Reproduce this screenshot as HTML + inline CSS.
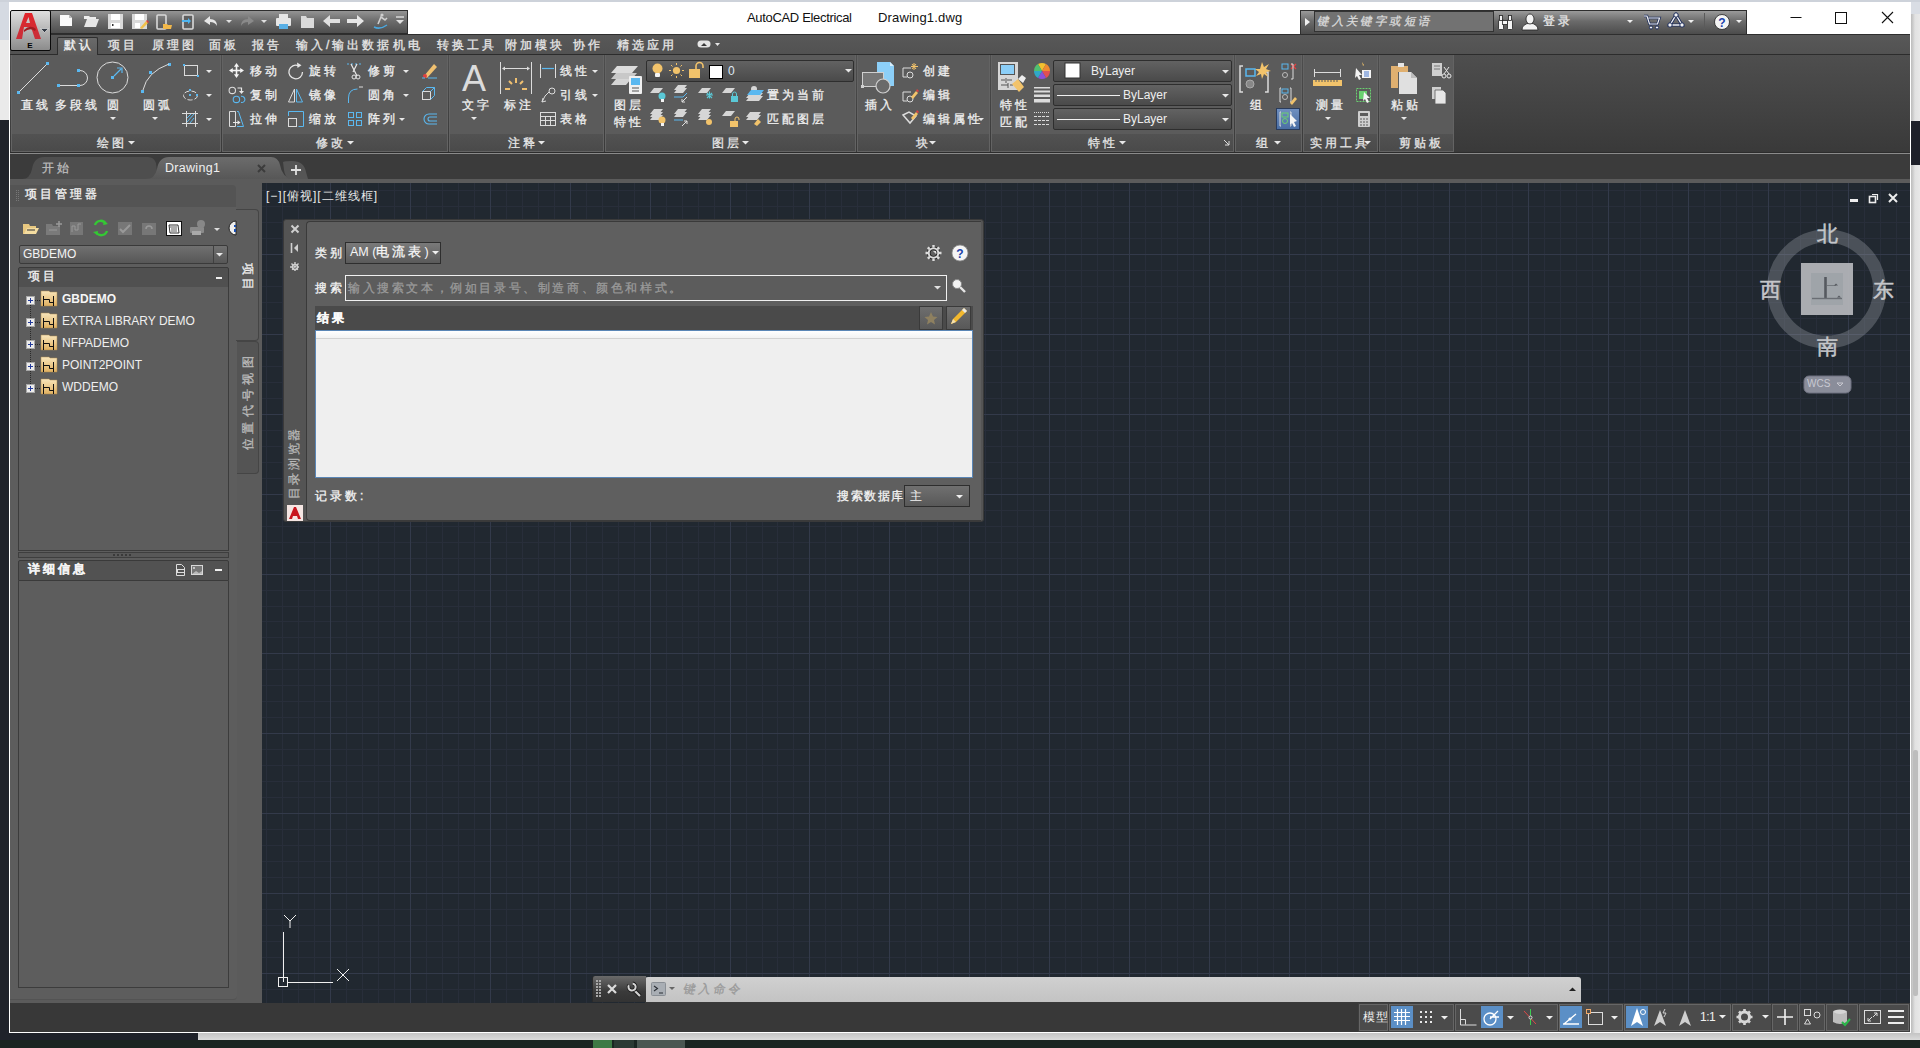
<!DOCTYPE html>
<html><head><meta charset="utf-8"><title>AutoCAD Electrical - Drawing1.dwg</title>
<style>
*{margin:0;padding:0;box-sizing:border-box}
html,body{width:1920px;height:1048px;overflow:hidden;background:#1f222a;font-family:"Liberation Sans",sans-serif;font-size:12px;color:#e6e6e6}
.a{position:absolute;white-space:nowrap}
svg{position:absolute;overflow:visible}
.zh{letter-spacing:3px}
.lbl,.pt,[style*="letter-spacing:3px"],[style*="letter-spacing:2.6px"],[style*="letter-spacing:4.3px"],[style*="letter-spacing:2.4px"],[style*="letter-spacing:1.6px"]{-webkit-text-stroke:0.3px currentColor}
.t12{font-size:12px;line-height:14px}
.lbl{position:absolute;white-space:nowrap;font-size:12px;line-height:14px;color:#f0f0f0;letter-spacing:3px}
.dd{position:absolute;width:0;height:0;border-left:3px solid transparent;border-right:3px solid transparent;border-top:3px solid #e8e8e8}
.pt{position:absolute;white-space:nowrap;font-size:12px;line-height:14px;color:#e6e6e6;letter-spacing:3px}
</style></head><body>
<!-- ===== desktop ===== -->
<div class="a" style="left:0;top:0;width:10px;height:40px;background:#d5dae2"></div>
<div class="a" style="left:0;top:40px;width:10px;height:80px;background:#eaeaea"></div>
<div class="a" style="left:1911px;top:0;width:9px;height:1040px;background:linear-gradient(90deg,#bcbcbc,#cdcdcd 2px,#e2e2e2 4px,#e8e8e8)"></div>
<div class="a" style="left:1911px;top:0;width:9px;height:14px;background:#d9dde4"></div>
<div class="a" style="left:1911px;top:121px;width:9px;height:44px;background:#1e2029"></div>
<div class="a" style="left:1913px;top:750px;width:5px;height:246px;background:#bdbdbd;border-radius:2px"></div>
<div class="a" style="left:198px;top:1033px;width:1722px;height:7px;background:linear-gradient(#c4c4c4,#dadada)"></div>
<div class="a" style="left:0;top:1040px;width:1920px;height:8px;background:#1a2622"></div>
<div class="a" style="left:593px;top:1040px;width:19px;height:8px;background:#3d7a45"></div>
<div class="a" style="left:614px;top:1040px;width:20px;height:8px;background:#2b3a34"></div>
<div class="a" style="left:637px;top:1040px;width:48px;height:8px;background:#4a5752"></div>

<!-- ===== window ===== -->
<div class="a" style="left:0;top:0;width:1920px;height:2px;background:#cdd2da"></div>
<div class="a" style="left:9px;top:2px;width:1902px;height:1031px;background:#ffffff"></div>

<!-- title text -->
<div class="a" style="left:747px;top:11px;font-size:13px;line-height:14px;color:#111;letter-spacing:-0.33px">AutoCAD Electrical</div>
<div class="a" style="left:878px;top:11px;font-size:13px;line-height:14px;color:#111;letter-spacing:0.17px">Drawing1.dwg</div>

<!-- window controls -->
<svg style="left:0;top:0" width="1920" height="40">
<path d="M1790.5 17.5h11" stroke="#111" stroke-width="1"/>
<rect x="1835.5" y="12.5" width="11" height="11" fill="none" stroke="#111"/>
<path d="M1882 12l11 11M1893 12l-11 11" stroke="#111" stroke-width="1.1"/>
</svg>

<!-- app button -->
<div class="a" style="left:10px;top:10px;width:41px;height:41px;border:1px solid #0a0a0a;border-radius:2px;background:linear-gradient(#dedede,#8c8c8c);z-index:5"></div>
<svg style="left:10px;top:10px;z-index:6" width="41" height="41">
<defs><linearGradient id="ag" x1="0" y1="0" x2="0" y2="1"><stop offset="0" stop-color="#e2252b"/><stop offset="1" stop-color="#c8303a"/></linearGradient></defs>
<path d="M6 29 L15 3 L22 3 L31 29 L25 29 L21 17 L14 17 L12 29Z M16 13 L20 13 L18.5 7Z" fill="url(#ag)" fill-rule="evenodd"/>
<path d="M14 20 Q20 14 26 19 L25 21 Q20 17 14 22Z" fill="#a01c22"/>
<path d="M30.5 18.5h8l-4 4z" fill="#333a44" stroke="#f0f0f0" stroke-width="0.6"/>
<text x="20" y="38" font-family="Liberation Sans" font-weight="bold" font-size="8" fill="#000" text-anchor="middle">E</text>
</svg>

<!-- quick access toolbar -->
<div class="a" style="left:50px;top:10px;width:358px;height:24px;background:linear-gradient(#949494 0,#6c6c6c 45%,#4e4e4e 100%);border-top:1px solid #2e2e2e;border-bottom:1px solid #2c2c2c;border-right:1px solid #2e2e2e"></div>
<svg style="left:0;top:0" width="420" height="40">
<!-- new -->
<path d="M60 15h9l3 3v8h-12z" fill="#fafafa"/><path d="M69 15v3h3z" fill="#bdbdbd"/>
<!-- open -->
<path d="M84 16h5l1 1h6v2h-12z" fill="#ededed"/><path d="M84 27l3-8h12l-3 8z" fill="#e6e6e6"/>
<!-- save -->
<path d="M108 14h15v15h-15z" fill="#d9d9d9"/><rect x="111" y="14" width="9" height="6" fill="#fff"/><rect x="111" y="23" width="9" height="5" fill="#fff"/><rect x="112" y="24" width="1.5" height="2" fill="#333"/>
<!-- save as -->
<path d="M132 14h15v15h-15z" fill="#d9d9d9"/><rect x="135" y="14" width="9" height="6" fill="#fff"/><rect x="135" y="23" width="5" height="5" fill="#fff"/>
<path d="M140 28l6-7 2 2-6 6z" fill="#f2c04a"/><path d="M146 21l1-1 2 2-1 1z" fill="#e03a3a"/>
<!-- open from cloud -->
<rect x="157" y="15" width="9" height="14" rx="1" fill="none" stroke="#d9d9d9" stroke-width="1.6"/><path d="M163 24h4l1 1h4l-1 4h-8z" fill="#f2b84a"/>
<!-- save to cloud -->
<rect x="183" y="15" width="10" height="14" rx="1" fill="#5f5f5f" stroke="#d9d9d9" stroke-width="1.6"/><path d="M182 20h6v-2l3 3-3 3v-2h-6z" fill="#4eb4ef"/>
<!-- undo -->
<path d="M204 21l6-5v3q7 0 7 7q-2-4-7-4v3z" fill="#e6e6e6"/><path d="M226 20h6l-3 3z" fill="#e0e0e0"/>
<!-- redo -->
<path d="M254 21l-6-5v3q-7 0-7 7q2-4 7-4v3z" fill="#8a8a8a"/><path d="M261 20h6l-3 3z" fill="#e0e0e0"/>
<!-- plot -->
<rect x="276" y="18" width="15" height="8" rx="1" fill="#e6e6e6"/><rect x="279" y="14" width="9" height="4" fill="#e6e6e6"/><rect x="279" y="24" width="9" height="5" fill="#5ab0e6"/>
<!-- folder -->
<path d="M301 16h5l1 2h7v10h-13z" fill="#dadada"/>
<!-- back / forward -->
<path d="M323 21l7-6v4h10v4h-10v4z" fill="#e0e0e0"/><path d="M364 21l-7-6v4h-10v4h10v4z" fill="#e6e6e6"/>
<!-- surfer -->
<path d="M374 27q6 3 13-2" stroke="#4aa8e0" stroke-width="1.5" fill="none"/><circle cx="382" cy="15" r="1.6" fill="#cfcfcf"/><path d="M378 24l3-7 4 3 2-2" stroke="#cfcfcf" stroke-width="1.6" fill="none"/>
<!-- customize -->
<path d="M396 17h8" stroke="#e0e0e0" stroke-width="1.4"/><path d="M396 20h8l-4 4z" fill="#e0e0e0"/>
</svg>

<!-- infocenter toolbar -->
<div class="a" style="left:1300px;top:10px;width:447px;height:24px;background:linear-gradient(#9a9a9a,#6a6a6a 45%,#4c4c4c);border:1px solid #2e2e2e;border-bottom:none"></div>
<div class="a" style="left:1314px;top:11px;width:180px;height:21px;background:#727272;border:1px solid #333"></div>
<div class="a" style="left:1318px;top:14px;font-size:11.5px;line-height:14px;color:#dadada;transform:skewX(-12deg);letter-spacing:2.4px">键入关键字或短语</div>
<svg style="left:0;top:0" width="1920" height="40">
<path d="M1305 18l5 4-5 4z" fill="#f0f0f0"/>
<g stroke="#222" stroke-width="0.8" fill="#f4f4f4">
<rect x="1498.5" y="19.5" width="5" height="10" rx="1"/><rect x="1507.5" y="19.5" width="5" height="10" rx="1"/>
<rect x="1499.5" y="15.5" width="3" height="5"/><rect x="1508.5" y="15.5" width="3" height="5"/>
<rect x="1502.5" y="20.5" width="5" height="4"/>
</g>
<path d="M1522 30q0-6 8-7q8 1 8 7z" fill="#f4f4f4" stroke="#222" stroke-width="0.8"/>
<ellipse cx="1530" cy="19" rx="4" ry="5" fill="#f4f4f4" stroke="#222" stroke-width="0.8"/>
<path d="M1627 20h6l-3 3z" fill="#f0f0f0"/>
<path d="M1644 16h3l2.5 8h8l2-6h-11" stroke="#1a2a5a" stroke-width="2.6" fill="none"/>
<path d="M1644 16h3l2.5 8h8l2-6h-11" stroke="#f4f4f4" stroke-width="1.2" fill="none"/>
<circle cx="1651" cy="27.5" r="1.6" fill="#f4f4f4" stroke="#1a2a5a"/><circle cx="1657" cy="27.5" r="1.6" fill="#f4f4f4" stroke="#1a2a5a"/>
<path d="M1676 15l-6 10h12z" fill="none" stroke="#1a2a5a" stroke-width="3"/><path d="M1676 15l-6 10h12z" fill="none" stroke="#f4f4f4" stroke-width="1.4"/>
<circle cx="1676" cy="15" r="2.2" fill="#f4f4f4" stroke="#1a2a5a"/><circle cx="1670" cy="25" r="2.2" fill="#f4f4f4" stroke="#1a2a5a"/><circle cx="1682" cy="25" r="2.2" fill="#f4f4f4" stroke="#1a2a5a"/>
<path d="M1688 20h6l-3 3z" fill="#f0f0f0"/>
<path d="M1704.5 13v17" stroke="#5a5a5a"/>
<circle cx="1722" cy="22" r="7.5" fill="#f4f4f4" stroke="#222" stroke-width="0.8"/>
<text x="1722" y="26.5" font-family="Liberation Sans" font-weight="bold" font-size="12" fill="#1a3faa" text-anchor="middle">?</text>
<path d="M1736 20h6l-3 3z" fill="#f0f0f0"/>
</svg>
<div class="a" style="left:1543px;top:14px;font-size:12px;line-height:14px;color:#e6e6e6;letter-spacing:3px">登录</div>

<!-- ===== ribbon tabs ===== -->
<div class="a" style="left:10px;top:34px;width:1900px;height:21px;background:linear-gradient(#585858,#525252);border-top:1px solid #2e2e2e;border-bottom:1px solid #2c2c2c"></div>
<div class="a" style="left:57px;top:37px;width:41px;height:19px;background:linear-gradient(#6a6a6a,#5b5b5b);border:1px solid #2e2e2e;border-bottom:none;border-radius:2px 2px 0 0"></div>
<div class="pt" style="left:64px;top:38px;color:#f4f4f4">默认</div>
<div class="pt" style="left:108px;top:38px">项目</div>
<div class="pt" style="left:152px;top:38px">原理图</div>
<div class="pt" style="left:209px;top:38px">面板</div>
<div class="pt" style="left:252px;top:38px">报告</div>
<div class="pt" style="left:296px;top:38px">输入/输出数据</div>
<div class="pt" style="left:393px;top:38px">机电</div>
<div class="pt" style="left:437px;top:38px">转换工具</div>
<div class="pt" style="left:505px;top:38px">附加模块</div>
<div class="pt" style="left:573px;top:38px">协作</div>
<div class="pt" style="left:617px;top:38px">精选应用</div>
<svg style="left:0;top:0" width="760" height="60">
<rect x="697.5" y="40.5" width="13" height="7" rx="3.5" fill="#e6e6e6"/><path d="M701 46l3-3 3 3z" fill="#3a3a3a"/>
<path d="M715 43h5l-2.5 3z" fill="#e6e6e6"/>
</svg>

<!-- ===== ribbon body ===== -->
<div class="a" style="left:10px;top:55px;width:1900px;height:98px;background:linear-gradient(#4e4e4e,#393939)"></div>
<div class="a" style="left:10px;top:152px;width:1900px;height:1px;background:#2c2c2c"></div>
<div class="a" style="left:10px;top:153px;width:1900px;height:1px;background:#8a8a8a"></div>
<!-- panels -->
<div class="a" style="left:11px;top:55px;width:210px;height:97px;background:#5b5b5b;border:1px solid #636363;border-top:none"></div>
<div class="a" style="left:222px;top:55px;width:226px;height:97px;background:#5b5b5b;border:1px solid #636363;border-top:none"></div>
<div class="a" style="left:449px;top:55px;width:155px;height:97px;background:#5b5b5b;border:1px solid #636363;border-top:none"></div>
<div class="a" style="left:605px;top:55px;width:251px;height:97px;background:#5b5b5b;border:1px solid #636363;border-top:none"></div>
<div class="a" style="left:857px;top:55px;width:133px;height:97px;background:#5b5b5b;border:1px solid #636363;border-top:none"></div>
<div class="a" style="left:991px;top:55px;width:243px;height:97px;background:#5b5b5b;border:1px solid #636363;border-top:none"></div>
<div class="a" style="left:1235px;top:55px;width:67px;height:97px;background:#5b5b5b;border:1px solid #636363;border-top:none"></div>
<div class="a" style="left:1303px;top:55px;width:75px;height:97px;background:#5b5b5b;border:1px solid #636363;border-top:none"></div>
<div class="a" style="left:1379px;top:55px;width:75px;height:97px;background:#5b5b5b;border:1px solid #636363;border-top:none"></div>
<!-- panel title bars -->
<div class="a" style="left:12px;top:134px;width:208px;height:17px;background:linear-gradient(#525252,#4a4a4a)"></div>
<div class="a" style="left:223px;top:134px;width:224px;height:17px;background:linear-gradient(#525252,#4a4a4a)"></div>
<div class="a" style="left:450px;top:134px;width:153px;height:17px;background:linear-gradient(#525252,#4a4a4a)"></div>
<div class="a" style="left:606px;top:134px;width:249px;height:17px;background:linear-gradient(#525252,#4a4a4a)"></div>
<div class="a" style="left:858px;top:134px;width:131px;height:17px;background:linear-gradient(#525252,#4a4a4a)"></div>
<div class="a" style="left:992px;top:134px;width:241px;height:17px;background:linear-gradient(#525252,#4a4a4a)"></div>
<div class="a" style="left:1236px;top:134px;width:65px;height:17px;background:linear-gradient(#525252,#4a4a4a)"></div>
<div class="a" style="left:1304px;top:134px;width:73px;height:17px;background:linear-gradient(#525252,#4a4a4a)"></div>
<div class="a" style="left:1380px;top:134px;width:73px;height:17px;background:linear-gradient(#525252,#4a4a4a)"></div>
<!-- panel titles -->
<div class="pt" style="left:97px;top:136px">绘图</div>
<div class="pt" style="left:316px;top:136px">修改</div>
<div class="pt" style="left:508px;top:136px">注释</div>
<div class="pt" style="left:712px;top:136px">图层</div>
<div class="pt" style="left:916px;top:136px">块</div>
<div class="pt" style="left:1088px;top:136px">特性</div>
<div class="pt" style="left:1256px;top:136px">组</div>
<div class="pt" style="left:1310px;top:136px">实用工具</div>
<div class="pt" style="left:1399px;top:136px">剪贴板</div>

<!-- ribbon labels -->
<div class="lbl" style="left:21px;top:98px">直线</div>
<div class="lbl" style="left:55px;top:98px">多段线</div>
<div class="lbl" style="left:107px;top:98px">圆</div>
<div class="lbl" style="left:143px;top:98px">圆弧</div>
<div class="lbl" style="left:250px;top:64px">移动</div>
<div class="lbl" style="left:250px;top:88px">复制</div>
<div class="lbl" style="left:250px;top:112px">拉伸</div>
<div class="lbl" style="left:309px;top:64px">旋转</div>
<div class="lbl" style="left:309px;top:88px">镜像</div>
<div class="lbl" style="left:309px;top:112px">缩放</div>
<div class="lbl" style="left:368px;top:64px">修剪</div>
<div class="lbl" style="left:368px;top:88px">圆角</div>
<div class="lbl" style="left:368px;top:112px">阵列</div>
<div class="lbl" style="left:462px;top:98px">文字</div>
<div class="lbl" style="left:504px;top:98px">标注</div>
<div class="lbl" style="left:560px;top:64px">线性</div>
<div class="lbl" style="left:560px;top:88px">引线</div>
<div class="lbl" style="left:560px;top:112px">表格</div>
<div class="lbl" style="left:614px;top:98px">图层</div>
<div class="lbl" style="left:614px;top:115px">特性</div>
<div class="lbl" style="left:767px;top:88px">置为当前</div>
<div class="lbl" style="left:767px;top:112px">匹配图层</div>
<div class="lbl" style="left:865px;top:98px">插入</div>
<div class="lbl" style="left:923px;top:64px">创建</div>
<div class="lbl" style="left:923px;top:88px">编辑</div>
<div class="lbl" style="left:923px;top:112px">编辑属性</div>
<div class="lbl" style="left:1000px;top:98px">特性</div>
<div class="lbl" style="left:1000px;top:115px">匹配</div>
<div class="lbl" style="left:1250px;top:98px">组</div>
<div class="lbl" style="left:1316px;top:98px">测量</div>
<div class="lbl" style="left:1391px;top:98px">粘贴</div>

<!-- layer dropdown -->
<div class="a" style="left:646px;top:60px;width:208px;height:22px;background:linear-gradient(#626262,#4a4a4a);border:1px solid #2e2e2e;border-radius:2px"></div>
<div class="a" style="left:728px;top:64px;font-size:12px;line-height:14px;color:#dfe8f4">0</div>
<!-- property dropdowns -->
<div class="a" style="left:1053px;top:60px;width:179px;height:22px;background:linear-gradient(#626262,#4a4a4a);border:1px solid #2e2e2e;border-radius:2px"></div>
<div class="a" style="left:1053px;top:84px;width:179px;height:22px;background:linear-gradient(#626262,#4a4a4a);border:1px solid #2e2e2e;border-radius:2px"></div>
<div class="a" style="left:1053px;top:108px;width:179px;height:22px;background:linear-gradient(#626262,#4a4a4a);border:1px solid #2e2e2e;border-radius:2px"></div>
<div class="a" style="left:1091px;top:64px;font-size:12px;line-height:14px;color:#eee">ByLayer</div>
<div class="a" style="left:1123px;top:88px;font-size:12px;line-height:14px;color:#eee">ByLayer</div>
<div class="a" style="left:1123px;top:112px;font-size:12px;line-height:14px;color:#eee">ByLayer</div>
<!-- group highlighted button -->
<div class="a" style="left:1276px;top:108px;width:24px;height:22px;background:linear-gradient(#6f8fbf,#4a6ea4);border:1px solid #2a3c5c"></div>

<svg style="left:0;top:0" width="1460" height="160">
<g fill="#5ab8f0">
<rect x="17" y="91" width="3" height="3"/><rect x="46" y="62" width="3" height="3"/>
<rect x="57" y="84" width="3" height="3"/><rect x="77" y="84" width="3" height="3"/><rect x="77" y="69" width="3" height="3"/>
<rect x="111" y="76" width="3" height="3"/>
<rect x="141" y="90" width="3" height="3"/><rect x="149" y="71" width="3" height="3"/><rect x="168" y="63" width="3" height="3"/>
</g>
<g fill="none" stroke="#dcdcdc" stroke-width="1">
<path d="M19.5 91.5L46.5 64.5"/>
<path d="M60 85.5h17M80 70.5a7.5 7.5 0 0 1 0 15"/>
<circle cx="112.5" cy="77.5" r="15.5"/>
<path d="M143 90q4-18 26-26"/>
</g>
<path d="M114 76l7-7M117 68h5v5" stroke="#5ab8f0" stroke-width="1.2" fill="none"/>
<!-- rect / ellipse / hatch -->
<rect x="184.5" y="65.5" width="13" height="10" fill="none" stroke="#dcdcdc"/>
<rect x="183" y="64" width="2" height="2" fill="#5ab8f0"/><rect x="197" y="75" width="2" height="2" fill="#5ab8f0"/>
<ellipse cx="190.5" cy="95.5" rx="7" ry="4.5" fill="none" stroke="#dcdcdc" stroke-dasharray="5 2"/>
<rect x="189" y="94" width="2" height="2" fill="#5ab8f0"/><rect x="196" y="94" width="2" height="2" fill="#5ab8f0"/><rect x="189" y="89" width="2" height="2" fill="#5ab8f0"/>
<path d="M186.5 111v16M195.5 111v16M182 113.5h16M182 123.5h16" stroke="#dcdcdc" fill="none"/>
<path d="M187 122l7-8M187 118l4-4M190 123l4-5" stroke="#5ab8f0" fill="none"/>
<g fill="#e8e8e8">
<path d="M206 70h6l-3 3z"/><path d="M206 94h6l-3 3z"/><path d="M206 118h6l-3 3z"/>
<path d="M110 117h6l-3 3z"/><path d="M152 117h6l-3 3z"/>
<path d="M403 70h6l-3 3z"/><path d="M403 94h6l-3 3z"/><path d="M399 118h6l-3 3z"/>
<path d="M471 117h6l-3 3z"/><path d="M592 70h6l-3 3z"/><path d="M592 94h6l-3 3z"/>
<path d="M845 69h7l-3.5 3.5z"/>
<path d="M978 118h6l-3 3z"/>
<path d="M1222 70h7l-3.5 3.5z"/><path d="M1222 94h7l-3.5 3.5z"/><path d="M1222 118h7l-3.5 3.5z"/>
<path d="M1325 117h6l-3 3z"/><path d="M1401 117h6l-3 3z"/>
<path d="M128 141h7l-3.5 3.5z"/><path d="M347 141h7l-3.5 3.5z"/><path d="M538 141h7l-3.5 3.5z"/><path d="M742 141h7l-3.5 3.5z"/>
<path d="M929 141h7l-3.5 3.5z"/><path d="M1119 141h7l-3.5 3.5z"/><path d="M1274 141h7l-3.5 3.5z"/><path d="M1364 141h7l-3.5 3.5z"/>
</g>
<path d="M1224 140l5 5M1229 141v4h-4" stroke="#ddd" fill="none"/>

<!-- modify panel icons -->
<g fill="#f4f4f4"><rect x="231" y="69.7" width="11" height="1.6"/><rect x="235.7" y="65" width="1.6" height="11"/>
<path d="M236.5 63l-2.6 3.8h5.2zM236.5 78l-2.6-3.8h5.2zM229 70.5l3.8-2.6v5.2zM244 70.5l-3.8-2.6v5.2z"/></g>
<circle cx="232.3" cy="90.4" r="3.2" fill="none" stroke="#dcdcdc" stroke-width="1.1"/><path d="M237.5 88h4v3.5" stroke="#e8e8e8" stroke-width="1.2" fill="none"/><path d="M239 91h5l-2.5 3z" fill="#e8e8e8"/>
<circle cx="236.4" cy="99.4" r="3.2" fill="none" stroke="#5ab8f0" stroke-width="1.1"/><path d="M241 96.4a3.1 3.1 0 1 1 0 6" fill="none" stroke="#5ab8f0" stroke-width="1.1"/>
<path d="M229.5 111.5h6v15h-6z" fill="none" stroke="#dcdcdc"/><path d="M233 122.5h5" stroke="#e8e8e8"/><path d="M237.5 120.3l3 2.2-3 2.2z" fill="#e8e8e8"/><path d="M237 111.5h1.5l5 15h-6.5" stroke="#5ab8f0" fill="none"/>
<path d="M302.5 72a6.8 6.8 0 1 1-4-6.2" fill="none" stroke="#e6e6e6" stroke-width="1.3"/><path d="M297 62.5l4.5 2.8-4 2.8z" fill="#e6e6e6"/>
<path d="M294.5 89l-6 13h6z" fill="none" stroke="#dcdcdc"/><path d="M296.5 89l6 13h-6z" fill="none" stroke="#5ab8f0"/>
<path d="M288.5 116v-4.5h15v15h-5" fill="none" stroke="#5ab8f0"/><rect x="288.5" y="118.5" width="8" height="8" fill="none" stroke="#dcdcdc"/>
<path d="M347 64h16" stroke="#5ab8f0" stroke-dasharray="2 2"/><path d="M351 64l6 12M357 64l-4 8" stroke="#e8e8e8" stroke-width="1.2"/><circle cx="354" cy="77" r="2" fill="none" stroke="#e8e8e8"/><circle cx="358" cy="77" r="2" fill="none" stroke="#e8e8e8"/>
<path d="M348.5 103v-5q0-9 9-9" stroke="#5ab8f0" fill="none"/><path d="M359 87h4" stroke="#dcdcdc"/>
<g fill="none" stroke="#5ab8f0"><rect x="348.5" y="112.5" width="5" height="5"/><rect x="356.5" y="112.5" width="5" height="5"/><rect x="348.5" y="120.5" width="5" height="5"/><rect x="356.5" y="120.5" width="5" height="5"/></g>
<path d="M424 76l10-12 3 3-10 11z" fill="#f0c070"/><circle cx="425" cy="76" r="2" fill="#e04040"/><path d="M422 78h3M428 78h9" stroke="#5ab8f0"/>
<rect x="422.5" y="91.5" width="8" height="8" fill="none" stroke="#dcdcdc"/><path d="M422.5 91.5l4-4h8v8l-4 4M430.5 91.5l4-4" stroke="#5ab8f0" fill="none"/>
<path d="M437 114h-8a5 5 0 0 0 0 10h8M437 117h-7a2 2 0 0 0 0 4h7" stroke="#5ab8f0" fill="none" stroke-width="1.1"/>

<!-- annotation -->
<text x="474" y="91" font-family="Liberation Sans" font-size="36" fill="#dcdcdc" text-anchor="middle">A</text>
<path d="M500.5 62v32M531.5 62v32M503 68.5h26" stroke="#dcdcdc" fill="none"/><path d="M502 68.5l3-2v4zM530 68.5l-3-2v4z" fill="#dcdcdc"/>
<path d="M516 78v5M509 81l3 3M523 81l-3 3M505 89h5M522 89h5" stroke="#f0c070" stroke-width="2"/>
<path d="M540.5 64v14M555.5 64v14" stroke="#dcdcdc"/><path d="M542 68.5h12" stroke="#5ab8f0" stroke-width="1.2"/>
<circle cx="552" cy="91" r="3" fill="none" stroke="#dcdcdc"/><path d="M549 92l-4 4-3 6M542 102l1-4M542 102l4-1" stroke="#dcdcdc" fill="none"/>
<rect x="540.5" y="112.5" width="15" height="13" fill="none" stroke="#dcdcdc"/><path d="M540 116.5h16M540 120.5h16M545.5 116v10M550.5 116v10" stroke="#dcdcdc"/>

<!-- layer properties big icon -->
<path d="M611 73l6-7h21l-6 7z" fill="#dcdcdc"/><path d="M611 79l5-6h21l-5 6z" fill="#c8c8c8"/><path d="M611 85l5-6h15l-5 6z" fill="#d6d6d6"/>
<rect x="629" y="76" width="13" height="18" rx="1" fill="#f0f0f0"/><rect x="631" y="78" width="9" height="7" fill="#5ab8f0"/><path d="M632 88h7M632 91h7" stroke="#555"/>
<!-- layer dropdown icons -->
<circle cx="657.5" cy="68.5" r="5" fill="#f2c36b"/><rect x="655" y="73" width="5" height="4" rx="1" fill="#f4f4f4"/>
<circle cx="676.5" cy="70.5" r="3.6" fill="#f2c36b"/><path d="M676.5 63v2M676.5 76v2M669 70.5h2M682 70.5h2M671 65l1.5 1.5M682 65l-1.5 1.5M671 76l1.5-1.5M682 76l-1.5-1.5" stroke="#f2c36b"/>
<rect x="689" y="69" width="11" height="9" fill="#f2c36b"/><path d="M696 69v-3a3.5 3.5 0 0 1 7 0v2" stroke="#f2c36b" stroke-width="1.6" fill="none"/>
<rect x="709.5" y="65.5" width="13" height="13" fill="#fff" stroke="#000"/>
<!-- layer row icons -->
<g fill="#d6d6d6">
<path d="M650 93l4-5h9l-4 5z"/><path d="M674 90l4-5h9l-4 5zM674 93l4-5h9l-4 5z"/><path d="M698 93l4-5h9l-4 5z"/><path d="M722 93l4-5h9l-4 5z"/>
<path d="M650 114l4-5h9l-4 5zM650 117l4-5h9l-4 5zM650 120l4-5h9l-4 5z"/><path d="M674 114l4-5h9l-4 5zM674 117l4-5h9l-4 5z"/><path d="M698 114l4-5h9l-4 5zM698 117l4-5h9l-4 5zM698 120l4-5h9l-4 5z"/><path d="M722 116l4-5h9l-4 5z"/>
<path d="M746 98l4-5h13l-4 5zM746 101l4-5h13l-4 5z"/><path d="M746 117l4-5h11l-4 5zM746 120l4-5h11l-4 5z"/>
<circle cx="754" cy="89" r="3" />
</g>
<circle cx="662" cy="96" r="3.5" fill="#5ac8d6"/><rect x="661" y="99" width="3" height="3" fill="#f4f4f4"/>
<path d="M674 97h9l4-4" stroke="#5ab8f0" fill="none"/><path d="M682 102l5-5M682 102h3M682 102v-3" stroke="#e0e0e0" fill="none"/>
<path d="M706 95h7M709.5 91.5v7M707 93l5 5M712 93l-5 5" stroke="#5ac8d6" stroke-width="1.1"/>
<rect x="731" y="96" width="7" height="6" fill="#5ac8d6"/><path d="M732.5 96v-2a2 2 0 0 1 4 0v2" stroke="#5ac8d6" fill="none"/>
<path d="M747 95l4-5h13l-4 5z" fill="#5ab8f0"/>
<circle cx="662" cy="120" r="3.5" fill="#f2c36b"/><rect x="661" y="123" width="3" height="3" fill="#f4f4f4"/>
<path d="M674 120h9" stroke="#5ab8f0"/><path d="M682 126l5-5M687 121h-3M687 121v3" stroke="#e0e0e0" fill="none"/>
<circle cx="709" cy="122" r="3" fill="#f2c36b"/>
<rect x="730" y="121" width="8" height="6" fill="#f2c36b"/><path d="M735 121v-2a2 2 0 0 1 4 0v1" stroke="#f2c36b" fill="none"/>
<path d="M754 124l4-5 3 3-4 4z" fill="#f2c36b"/>

<!-- block panel -->
<path d="M877 62h13l4 4v20h-17z" fill="#8ccff8"/><path d="M890 62v4h4z" fill="#d8eefc"/><rect x="862.5" y="72.5" width="21" height="14" fill="#777" stroke="#d0d0d0"/><circle cx="883" cy="86" r="7" fill="#6a6a6a" stroke="#d0d0d0" stroke-width="1.2"/><rect x="861" y="85" width="3" height="3" fill="#d0d0d0"/>
<path d="M903 68h8M903 68v9h4" stroke="#dcdcdc" fill="none"/><circle cx="910" cy="75" r="3" fill="none" stroke="#dcdcdc"/><path d="M914 63v7M911 66.5h7M912 64l4 5M916 64l-4 5" stroke="#f2c36b"/>
<path d="M903 92h8M903 92v9h4" stroke="#dcdcdc" fill="none"/><circle cx="910" cy="99" r="3" fill="none" stroke="#dcdcdc"/><path d="M911 97l5-6 2 2-5 6z" fill="#f2c36b"/><path d="M916 91l1-2 2 2-1 1z" fill="#e04040"/>
<path d="M903 115l6-3 7 4-6 7z" fill="none" stroke="#dcdcdc" stroke-width="1.5"/><path d="M911 118l5-6 2 2-5 6z" fill="#f2c36b"/><path d="M916 112l1-2 2 2-1 1z" fill="#e04040"/>

<!-- property panel -->
<rect x="998" y="62" width="20" height="28" fill="#d6d6d6"/><rect x="1000.5" y="64.5" width="14" height="10" fill="#8ccff8" stroke="#555"/><path d="M1001 80h4M1007 80h5M1001 85h7M1010 85h3M1006 78v5M1008 83v5" stroke="#555"/>
<path d="M1012 84l6-5 6 8-5 5z" fill="#f2c36b"/><path d="M1018 79l4-4 4 3-3 5z" fill="#eeeeee"/>
<path d="M1042 71L1038 64.07A8 8 0 0 1 1046 64.07Z" fill="#f2c030"/><path d="M1042 71L1046 64.07A8 8 0 0 1 1050 71Z" fill="#f08a30"/><path d="M1042 71L1050 71A8 8 0 0 1 1046 77.93Z" fill="#e05050"/><path d="M1042 71L1046 77.93A8 8 0 0 1 1038 77.93Z" fill="#8a50d8"/><path d="M1042 71L1038 77.93A8 8 0 0 1 1034 71Z" fill="#30a8c8"/><path d="M1042 71L1034 71A8 8 0 0 1 1038 64.07Z" fill="#50c070"/>
<rect x="1034" y="87" width="16" height="1.5" fill="#dcdcdc"/><rect x="1034" y="90.5" width="16" height="2" fill="#dcdcdc"/><rect x="1034" y="94.5" width="16" height="2.5" fill="#dcdcdc"/><rect x="1034" y="99" width="16" height="3.5" fill="#dcdcdc"/>
<path d="M1034 112.5h15" stroke="#dcdcdc" stroke-dasharray="1 1"/><path d="M1034 116.5h15M1034 120.5h15M1034 124.5h15" stroke="#dcdcdc" stroke-dasharray="3 1"/>
<rect x="1065" y="63" width="15" height="15" fill="#fff" stroke="#333"/>
<path d="M1057 95.5h63M1057 119.5h63" stroke="#f0f0f0"/>

<!-- group panel -->
<path d="M1243 66h-3v26h3M1265 72h3v20h-3" stroke="#dcdcdc" stroke-width="1.5" fill="none"/>
<rect x="1246" y="69" width="9" height="7" fill="none" stroke="#5ab8f0" stroke-width="1.5"/><circle cx="1250" cy="84" r="4" fill="#888" stroke="#aaa"/>
<path d="M1262 62l2 5 5-3-3 5 5 2-5 1 2 5-4-3-2 5-1-5-5 2 3-4-4-3 5 0z" fill="#f2c36b"/>
<rect x="1282" y="64" width="6" height="5" fill="none" stroke="#5ab8f0"/><circle cx="1285" cy="75" r="2.5" fill="none" stroke="#bbb"/><path d="M1291 64l5 5M1296 64l-5 5" stroke="#e04040" stroke-width="1.4"/><path d="M1291 64h2v15h-2" stroke="#dcdcdc" fill="none"/>
<path d="M1281 88h-1v14h1M1290 88h1v14h-1" stroke="#dcdcdc" fill="none"/><rect x="1282" y="89" width="6" height="4" fill="none" stroke="#5ab8f0"/><circle cx="1285" cy="97" r="2.5" fill="none" stroke="#bbb"/><path d="M1290 103l5-6 2 2-5 6z" fill="#f2c36b"/>
<path d="M1281 112h-1v14h1M1290 112h1v14h-1" stroke="#dcdcdc" fill="none"/><rect x="1282" y="113" width="6" height="4" fill="none" stroke="#6ad070"/><circle cx="1285" cy="121" r="2.5" fill="none" stroke="#6ad070"/><path d="M1290 114l7 7-3 1 2 4-2 1-2-4-2 2z" fill="#f4f4f4"/>

<!-- utilities -->
<path d="M1314 72.5h27M1314.5 69v8M1340.5 69v8" stroke="#dcdcdc" fill="none"/><rect x="1313" y="80" width="29" height="6" fill="#f2c36b"/><path d="M1316 80v2M1319 80v2M1322 80v2M1325 80v2M1328 80v2M1331 80v2M1334 80v2M1337 80v2" stroke="#5b5b5b"/>
<path d="M1356 68l6 7-3 0 2 4-2 1-2-4-2 2z" fill="#f4f4f4"/><rect x="1362" y="70" width="9" height="8" fill="#f4f4f4"/><path d="M1364 72h5M1364 74h5M1364 76h5" stroke="#4a7ad0"/><path d="M1362 62l2 3-1 1z" fill="#f2c36b"/>
<rect x="1356.5" y="88.5" width="14" height="13" fill="none" stroke="#6ad070" stroke-dasharray="2 1"/><rect x="1359" y="91" width="8" height="8" fill="#6ad070"/><path d="M1364 92l6 6-3 0 2 4-2 1-2-4-2 2z" fill="#f4f4f4"/>
<rect x="1358" y="111" width="12" height="16" rx="1" fill="#cfcfcf"/><rect x="1360" y="113" width="8" height="3" fill="#5b5b5b"/><path d="M1360 119h2M1363 119h2M1366 119h2M1360 122h2M1363 122h2M1366 122h2M1360 125h2M1363 125h2M1366 125h2" stroke="#5b5b5b"/>

<!-- clipboard -->
<path d="M1391 66h17v6h-10v16h-7z" fill="#e0b070"/><rect x="1398" y="63" width="6" height="4" fill="#e6e6e6"/>
<path d="M1399 72h12l6 6v16h-18z" fill="#e0e0e0"/><path d="M1411 72v6h6" fill="#bdbdbd"/>
<rect x="1432" y="63" width="10" height="13" fill="#cfcfcf"/><path d="M1434 66h6M1434 69h6" stroke="#777"/><circle cx="1444" cy="76" r="2" fill="none" stroke="#e6e6e6"/><circle cx="1449" cy="76" r="2" fill="none" stroke="#e6e6e6"/><path d="M1444 74l5-7M1449 74l-5-7" stroke="#e6e6e6"/>
<rect x="1432" y="87" width="9" height="12" fill="#cfcfcf"/><path d="M1435 90h8l3 3v11h-11z" fill="#e6e6e6" stroke="#5b5b5b" stroke-width="0.8"/>
</svg>

<!-- ===== file tabs ===== -->
<div class="a" style="left:10px;top:154px;width:1900px;height:25px;background:#3b3b3b"></div>
<svg style="left:0;top:150px" width="320" height="34">
<path d="M22 29 Q30 29 32 19 Q34 7 44 7 L148 7 Q154 7 156 13 L158 29 Z" fill="#4e4e4e"/>
<defs><linearGradient id="tg" x1="0" y1="0" x2="0" y2="1"><stop offset="0" stop-color="#6c6c6c"/><stop offset="1" stop-color="#575757"/></linearGradient></defs>
<path d="M146 29 Q155 29 157 19 Q159 7 169 7 L271 7 Q278 7 280 15 Q282 27 292 29 Z" fill="url(#tg)"/>
<path d="M283 12 Q285 11 292 11 Q304 11 306 22 L308 29 L289 29 Q285 27 284 20 Z" fill="#555"/>
<path d="M258 15l7 7M265 15l-7 7" stroke="#3c3c3c" stroke-width="2"/>
<path d="M296 15v10M291 20h10" stroke="#e0e0e0" stroke-width="1.8"/>
</svg>
<div class="a" style="left:42px;top:161px;font-size:12px;line-height:14px;color:#bdbdbd;letter-spacing:3px">开始</div>
<div class="a" style="left:165px;top:161px;font-size:12.5px;line-height:14px;color:#f0f0f0;letter-spacing:0.3px">Drawing1</div>

<!-- ===== main left area ===== -->
<div class="a" style="left:10px;top:179px;width:252px;height:824px;background:#5b5b5b"></div>
<div class="a" style="left:10px;top:179px;width:1900px;height:4px;background:#5b5b5b"></div>
<!-- palette header -->
<div class="a" style="left:10px;top:185px;width:226px;height:22px;background:#545454;border-radius:0 4px 0 0"></div>
<svg style="left:16px;top:190px" width="4" height="14"><g fill="#777"><rect x="0" y="0" width="1" height="1"/><rect x="2" y="0" width="1" height="1"/><rect x="0" y="2" width="1" height="1"/><rect x="2" y="2" width="1" height="1"/><rect x="0" y="4" width="1" height="1"/><rect x="2" y="4" width="1" height="1"/><rect x="0" y="6" width="1" height="1"/><rect x="2" y="6" width="1" height="1"/><rect x="0" y="8" width="1" height="1"/><rect x="2" y="8" width="1" height="1"/><rect x="0" y="10" width="1" height="1"/><rect x="2" y="10" width="1" height="1"/></g></svg>
<div class="a" style="left:25px;top:187px;font-size:12px;line-height:14px;color:#f4f4f4;letter-spacing:3px">项目管理器</div>
<!-- palette body -->
<div class="a" style="left:10px;top:207px;width:227px;height:793px;background:#5d5d5d;border-radius:0 0 4px 0;border-bottom:1px solid #535353"></div>
<!-- vertical tabs -->
<div class="a" style="left:236px;top:209px;width:23px;height:132px;background:#5d5d5d;border:1px solid #454545;border-left:none;border-radius:0 4px 4px 0"></div>
<div class="a" style="left:237px;top:341px;width:22px;height:133px;background:#545454;border:1px solid #454545;border-left:none;border-radius:0 4px 4px 0"></div>
<div class="a" style="left:248px;top:276px;line-height:14px;font-size:12px;color:#f0f0f0;transform:translate(-50%,-50%) rotate(90deg);letter-spacing:3px;padding-left:3px">项目</div>
<div class="a" style="left:248px;top:403px;line-height:14px;font-size:12px;color:#bdbdbd;transform:translate(-50%,-50%) rotate(-90deg);letter-spacing:4.3px;padding-left:4px">位置代号视图</div>

<!-- toolbar icons -->
<svg style="left:0;top:0" width="262" height="240">
<path d="M23 224h6l1 2h6v8h-13z" fill="#e8c880"/><path d="M24 234l3-6h12l-3 6z" fill="#f4dca0"/><path d="M27 230h8" stroke="#333"/>
<path d="M46 224h6l1 2h7v9h-14z" fill="#7a7a7a"/><path d="M49 230h8" stroke="#999"/><path d="M59 221v6M56 224h6" stroke="#999" stroke-width="1.5"/>
<rect x="70" y="222" width="13" height="13" fill="#777"/><path d="M72 232v-6h3v4h3v-6h3" stroke="#999" fill="none"/>
<path d="M95 225a6 6 0 0 1 11-1M107 231a6 6 0 0 1-11 1" stroke="#34c834" stroke-width="2.4" fill="none"/><path d="M104 221l4 3-5 1zM97 235l-4-3 5-1z" fill="#34c834"/>
<rect x="118" y="222" width="14" height="13" fill="#777"/><path d="M120 229l3 3 7-7" stroke="#999" stroke-width="2" fill="none"/>
<rect x="142" y="223" width="14" height="12" fill="#777"/><path d="M146 229a3 3 0 0 1 6 0" stroke="#999" stroke-width="1.5" fill="none"/>
<rect x="166.5" y="221.5" width="15" height="14" fill="#fff" stroke="#111"/><path d="M169 225h9l1 8h-9z" fill="none" stroke="#333"/><path d="M170 227h7M171 229h6M171 231h6" stroke="#333" stroke-width="0.8"/>
<rect x="190" y="227" width="14" height="6" rx="1" fill="#8a8a8a"/><rect x="192" y="231" width="9" height="4" fill="#aaa"/><circle cx="201" cy="224" r="4" fill="#888"/>
<path d="M214 228h6l-3 3z" fill="#ddd"/>
<path d="M236 221a7 7 0 0 0 0 14z" fill="#eee" stroke="#222"/><path d="M234 225h2v2h-2zM234 229h2v3h-2z" fill="#1a4fb0"/>
</svg>

<!-- project dropdown -->
<div class="a" style="left:19px;top:245px;width:209px;height:19px;background:linear-gradient(#707070,#575757);border:1px solid #3a3a3a;border-radius:2px"></div>
<div class="a" style="left:213px;top:246px;width:1px;height:17px;background:#404040"></div>
<div class="a" style="left:23px;top:247px;font-size:12px;line-height:14px;color:#f4f4f4">GBDEMO</div>
<svg style="left:0;top:0" width="240" height="270"><path d="M216 253h7l-3.5 3.5z" fill="#e8e8e8"/></svg>

<!-- project list header -->
<div class="a" style="left:18px;top:267px;width:211px;height:21px;background:#505050;border:1px solid #3a3a3a;border-radius:2px 2px 0 0"></div>
<div class="a" style="left:28px;top:269px;font-size:12px;line-height:14px;color:#f4f4f4;letter-spacing:3px">项目</div>
<div class="a" style="left:216px;top:277px;width:6px;height:2px;background:#f0f0f0"></div>
<!-- tree box -->
<div class="a" style="left:18px;top:287px;width:211px;height:264px;background:#5d5d5d;border:1px solid #3c3c3c;border-top:none"></div>
<svg style="left:0;top:0" width="240" height="400">
<path d="M30.5 305v84M35 300.5h6M35 322.5h6M35 344.5h6M35 366.5h6M35 388.5h6" stroke="#2a2a2a" stroke-dasharray="1 1" fill="none"/>
<g>
<rect x="26.5" y="296.5" width="8" height="8" fill="#ececec" stroke="#a8a8a8"/><path d="M28 300.5h5M30.5 298v5" stroke="#223a9a"/>
<rect x="26.5" y="318.5" width="8" height="8" fill="#ececec" stroke="#a8a8a8"/><path d="M28 322.5h5M30.5 320v5" stroke="#223a9a"/>
<rect x="26.5" y="340.5" width="8" height="8" fill="#ececec" stroke="#a8a8a8"/><path d="M28 344.5h5M30.5 342v5" stroke="#223a9a"/>
<rect x="26.5" y="362.5" width="8" height="8" fill="#ececec" stroke="#a8a8a8"/><path d="M28 366.5h5M30.5 364v5" stroke="#223a9a"/>
<rect x="26.5" y="384.5" width="8" height="8" fill="#ececec" stroke="#a8a8a8"/><path d="M28 388.5h5M30.5 386v5" stroke="#223a9a"/>
</g>
<defs><linearGradient id="fg" x1="0" y1="0" x2="0" y2="1"><stop offset="0" stop-color="#f8e6bc"/><stop offset="1" stop-color="#e0b060"/></linearGradient></defs>
<g fill="url(#fg)" stroke="#a88850" stroke-width="0.5">
<path d="M41 291h8l1 1h7v14h-16z"/><path d="M41 313h8l1 1h7v14h-16z"/><path d="M41 335h8l1 1h7v14h-16z"/><path d="M41 357h8l1 1h7v14h-16z"/><path d="M41 379h8l1 1h7v14h-16z"/>
</g>
<g stroke="#111" fill="none" stroke-width="1">
<path d="M43.5 296v10M53.5 296v10M44 299.5h5.5v3h4"/><path d="M43.5 318v10M53.5 318v10M44 321.5h5.5v3h4"/><path d="M43.5 340v10M53.5 340v10M44 343.5h5.5v3h4"/><path d="M43.5 362v10M53.5 362v10M44 365.5h5.5v3h4"/><path d="M43.5 384v10M53.5 384v10M44 387.5h5.5v3h4"/>
</g>
</svg>
<div class="a" style="left:62px;top:292px;font-size:12px;line-height:14px;color:#f6f6f6;font-weight:bold">GBDEMO</div>
<div class="a" style="left:62px;top:314px;font-size:12px;line-height:14px;color:#efefef">EXTRA LIBRARY DEMO</div>
<div class="a" style="left:62px;top:336px;font-size:12px;line-height:14px;color:#efefef">NFPADEMO</div>
<div class="a" style="left:62px;top:358px;font-size:12px;line-height:14px;color:#efefef">POINT2POINT</div>
<div class="a" style="left:62px;top:380px;font-size:12px;line-height:14px;color:#efefef">WDDEMO</div>

<!-- splitter -->
<div class="a" style="left:18px;top:552px;width:211px;height:6px;background:#585858;border:1px solid #3e3e3e"></div>
<svg style="left:113px;top:554px" width="22" height="3"><g fill="#3a3a3a"><rect x="0" y="0" width="2" height="2"/><rect x="4" y="0" width="2" height="2"/><rect x="8" y="0" width="2" height="2"/><rect x="12" y="0" width="2" height="2"/><rect x="16" y="0" width="2" height="2"/></g></svg>
<!-- details header -->
<div class="a" style="left:18px;top:560px;width:211px;height:21px;background:#525252;border:1px solid #3a3a3a;border-radius:2px 2px 0 0"></div>
<div class="a" style="left:28px;top:562px;font-size:12px;line-height:14px;color:#f4f4f4;letter-spacing:3px;font-weight:bold">详细信息</div>
<svg style="left:0;top:0" width="240" height="600">
<path d="M176.5 564.5h5l3 3v8h-8z" fill="none" stroke="#ddd"/><rect x="177.5" y="569.5" width="7" height="3" fill="none" stroke="#ddd"/>
<rect x="191" y="565" width="12" height="10" fill="#d8d8d8"/><rect x="192" y="566" width="10" height="8" fill="#777"/><circle cx="194" cy="568" r="1" fill="#ddd"/><path d="M192 574l4-3 3 2 3-2v3z" fill="#bbb"/>
<rect x="215" y="569" width="7" height="2" fill="#f0f0f0"/>
</svg>
<!-- details box -->
<div class="a" style="left:18px;top:581px;width:211px;height:407px;background:#5d5d5d;border:1px solid #3c3c3c;border-top:none"></div>

<!-- ===== canvas ===== -->
<div class="a" style="left:262px;top:183px;width:1648px;height:820px;background:#212830"></div>
<svg style="left:0;top:0" width="1920" height="1048" shape-rendering="crispEdges"><path d="M266.5 183v820M282.5 183v820M298.5 183v820M314.5 183v820M346.5 183v820M362.5 183v820M378.5 183v820M394.5 183v820M426.5 183v820M442.5 183v820M458.5 183v820M474.5 183v820M506.5 183v820M522.5 183v820M538.5 183v820M554.5 183v820M586.5 183v820M602.5 183v820M618.5 183v820M634.5 183v820M666.5 183v820M682.5 183v820M698.5 183v820M714.5 183v820M746.5 183v820M762.5 183v820M777.5 183v820M793.5 183v820M825.5 183v820M841.5 183v820M857.5 183v820M873.5 183v820M905.5 183v820M921.5 183v820M937.5 183v820M953.5 183v820M985.5 183v820M1001.5 183v820M1017.5 183v820M1033.5 183v820M1065.5 183v820M1081.5 183v820M1097.5 183v820M1113.5 183v820M1145.5 183v820M1161.5 183v820M1177.5 183v820M1193.5 183v820M1225.5 183v820M1241.5 183v820M1257.5 183v820M1273.5 183v820M1305.5 183v820M1321.5 183v820M1337.5 183v820M1353.5 183v820M1385.5 183v820M1401.5 183v820M1417.5 183v820M1433.5 183v820M1465.5 183v820M1481.5 183v820M1496.5 183v820M1512.5 183v820M1544.5 183v820M1560.5 183v820M1576.5 183v820M1592.5 183v820M1624.5 183v820M1640.5 183v820M1656.5 183v820M1672.5 183v820M1704.5 183v820M1720.5 183v820M1736.5 183v820M1752.5 183v820M1784.5 183v820M1800.5 183v820M1816.5 183v820M1832.5 183v820M1864.5 183v820M1880.5 183v820M1896.5 183v820M262 190.5h1648M262 206.5h1648M262 222.5h1648M262 238.5h1648M262 270.5h1648M262 286.5h1648M262 302.5h1648M262 318.5h1648M262 350.5h1648M262 366.5h1648M262 382.5h1648M262 398.5h1648M262 430.5h1648M262 446.5h1648M262 462.5h1648M262 478.5h1648M262 510.5h1648M262 526.5h1648M262 542.5h1648M262 558.5h1648M262 590.5h1648M262 606.5h1648M262 621.5h1648M262 637.5h1648M262 669.5h1648M262 685.5h1648M262 701.5h1648M262 717.5h1648M262 749.5h1648M262 765.5h1648M262 781.5h1648M262 797.5h1648M262 829.5h1648M262 845.5h1648M262 861.5h1648M262 877.5h1648M262 909.5h1648M262 925.5h1648M262 941.5h1648M262 957.5h1648M262 989.5h1648" stroke="#282e3a" stroke-width="1"/><path d="M330.5 183v820M410.5 183v820M490.5 183v820M570.5 183v820M650.5 183v820M730.5 183v820M809.5 183v820M889.5 183v820M969.5 183v820M1049.5 183v820M1129.5 183v820M1209.5 183v820M1289.5 183v820M1369.5 183v820M1449.5 183v820M1528.5 183v820M1608.5 183v820M1688.5 183v820M1768.5 183v820M1848.5 183v820M262 254.5h1648M262 334.5h1648M262 414.5h1648M262 494.5h1648M262 574.5h1648M262 653.5h1648M262 733.5h1648M262 813.5h1648M262 893.5h1648M262 973.5h1648" stroke="#333a4a" stroke-width="1"/></svg>
<div class="a" style="left:266px;top:189px;font-size:12px;line-height:14px;color:#e8e8e8;letter-spacing:1px">[−][俯视][二维线框]</div>
<!-- viewport controls -->
<svg style="left:0;top:0" width="1920" height="220">
<rect x="1850" y="199" width="8" height="3" fill="#eee"/>
<rect x="1869.5" y="196.5" width="6" height="6" fill="none" stroke="#eee" stroke-width="1.6"/><path d="M1872 194.5h5.5v5.5" stroke="#eee" fill="none" stroke-width="1.2"/>
<path d="M1889 194l8 8M1897 194l-8 8" stroke="#eee" stroke-width="2"/>
</svg>
<!-- viewcube -->
<svg style="left:0;top:0" width="1920" height="420">
<circle cx="1826.5" cy="289" r="53" fill="none" stroke="rgba(160,166,174,0.33)" stroke-width="13"/>
<rect x="1801" y="263" width="52" height="52" fill="rgba(176,178,182,0.96)"/>
<rect x="1811" y="273" width="32" height="32" fill="rgba(158,163,169,0.96)"/>
<path d="M1825.5 277v21" stroke="#55595f" stroke-width="2.6"/><path d="M1812 298.5h30" stroke="#6a6e74" stroke-width="1.4"/><path d="M1827 285.5h9" stroke="#6a6e74" stroke-width="0.8"/><path d="M1834 285.5l2-2 2 2z" fill="#55595f"/><path d="M1837 297.5l2-2 2 2z" fill="#55595f"/>
<rect x="1804" y="376" width="47" height="17" rx="5" fill="#8a8d9a" stroke="#6e7180"/>
<path d="M1837 383h6l-3 3z" fill="none" stroke="#c8c8d0"/>
</svg>
<div class="a" style="left:1827px;top:234px;font-size:21px;line-height:22px;color:#c4c6ca;transform:translate(-50%,-50%);-webkit-text-stroke:0.5px #c4c6ca">北</div>
<div class="a" style="left:1827px;top:347px;font-size:21px;line-height:22px;color:#c4c6ca;transform:translate(-50%,-50%);-webkit-text-stroke:0.5px #c4c6ca">南</div>
<div class="a" style="left:1770px;top:290px;font-size:21px;line-height:22px;color:#c4c6ca;transform:translate(-50%,-50%);-webkit-text-stroke:0.5px #c4c6ca">西</div>
<div class="a" style="left:1883px;top:290px;font-size:21px;line-height:22px;color:#c4c6ca;transform:translate(-50%,-50%);-webkit-text-stroke:0.5px #c4c6ca">东</div>
<div class="a" style="left:1807px;top:378px;font-size:10px;line-height:12px;color:#c8c9d2">WCS</div>
<!-- UCS icon -->
<svg style="left:0;top:0" width="1920" height="1000">
<path d="M283.5 932v50M288 982.5h45" stroke="#f0f0f0" fill="none"/>
<rect x="278.5" y="977.5" width="9" height="9" fill="none" stroke="#f0f0f0"/>
<path d="M284 915l6 6 6-6M290 921v7" stroke="#f0f0f0" fill="none"/>
<path d="M337 969l12 12M349 969l-12 12" stroke="#f0f0f0" fill="none"/>
</svg>

<!-- ===== catalog browser palette ===== -->
<div class="a" style="left:283px;top:219px;width:701px;height:303px;background:#545454;border:1px solid #3a3a3a;border-radius:3px"></div>
<div class="a" style="left:306px;top:221px;width:675px;height:300px;background:#5f5f5f;border:1px solid #3a3a3a;border-radius:4px 0 0 4px;border-right:none"></div>
<svg style="left:0;top:0" width="1000" height="530">
<path d="M291.5 225.5l7 7M298.5 225.5l-7 7" stroke="#cfcfcf" stroke-width="2"/>
<path d="M291.5 243v10" stroke="#cfcfcf" stroke-width="1.6"/><path d="M298 244v8l-4-4z" fill="#cfcfcf"/>
<circle cx="295" cy="267" r="2.5" fill="none" stroke="#cfcfcf" stroke-width="1.6"/><path d="M295 262v10M290 267h10M291.5 263.5l7 7M298.5 263.5l-7 7" stroke="#cfcfcf" stroke-width="1.4" stroke-dasharray="2 1.5"/>
<rect x="287" y="505" width="16" height="16" fill="#f5e6e3"/>
<path d="M289 519l5-12h2l5 12h-3l-1-3h-4l-1 3z" fill="#c8161e"/>
</svg>
<div class="a" style="left:294px;top:464px;line-height:14px;font-size:12px;color:#b8b8b8;transform:translate(-50%,-50%) rotate(-90deg);letter-spacing:2.6px;padding-left:2.6px">目录浏览器</div>

<div class="a" style="left:315px;top:246px;font-size:12px;line-height:14px;color:#f4f4f4;letter-spacing:3px">类别:</div>
<div class="a" style="left:345px;top:242px;width:96px;height:22px;background:linear-gradient(#7a7a7a,#5a5a5a);border:1px solid #2e2e2e"></div>
<div class="a" style="left:350px;top:245px;font-size:12.5px;line-height:14px;color:#f6f6f6">AM (<span style="letter-spacing:3px">电流表</span>)</div>
<div class="a" style="left:315px;top:281px;font-size:12px;line-height:14px;color:#f4f4f4;letter-spacing:3px">搜索:</div>
<div class="a" style="left:345px;top:275px;width:602px;height:26px;background:#5c5c5c;border:1px solid #f0f0f0"></div>
<div class="a" style="left:348px;top:281px;font-size:11.5px;line-height:14px;color:#9a9a9a;letter-spacing:2.6px">输入搜索文本，例如目录号、制造商、颜色和样式。</div>
<svg style="left:0;top:0" width="1000" height="530">
<path d="M432 251h7l-3.5 3.5z" fill="#f0f0f0"/>
<path d="M933 251h7l-3.5 3.5z" fill="#e0e0e0"/>
<circle cx="933.5" cy="253" r="4.8" fill="none" stroke="#1a1a1a" stroke-width="3.6"/>
<circle cx="933.5" cy="253" r="4.8" fill="none" stroke="#dcdcdc" stroke-width="2"/>
<path d="M933.5 245v16M925.5 253h16M927.8 247.3l11.4 11.4M939.2 247.3l-11.4 11.4" stroke="#dcdcdc" stroke-width="2.4" stroke-dasharray="2.5 11"/>
<circle cx="960" cy="253" r="8" fill="#f4f4f4" stroke="#888" stroke-width="0.8"/>
<text x="960" y="258" font-family="Liberation Sans" font-weight="bold" font-size="12" fill="#1a3faa" text-anchor="middle">?</text>
<path d="M934 286h7l-3.5 3.5z" fill="#e0e0e0"/>
<circle cx="957" cy="284" r="4.5" fill="#f4f4f4" stroke="#888"/><path d="M960 287l5 5" stroke="#e6e6e6" stroke-width="2.4"/>
</svg>
<!-- results -->
<div class="a" style="left:315px;top:306px;width:658px;height:24px;background:#4a4a4a"></div>
<div class="a" style="left:317px;top:311px;font-size:12px;line-height:14px;color:#fafafa;font-weight:bold;letter-spacing:3px">结果</div>
<div class="a" style="left:919px;top:306px;width:24px;height:24px;background:linear-gradient(#6e6e6e,#585858);border:1px solid #3a3a3a"></div>
<div class="a" style="left:946px;top:306px;width:25px;height:24px;background:linear-gradient(#6e6e6e,#585858);border:1px solid #3a3a3a"></div>
<svg style="left:0;top:0" width="1000" height="530">
<path d="M931 312l2 4.5 4.5.5-3.5 3 1 4.5-4-2.5-4 2.5 1-4.5-3.5-3 4.5-.5z" fill="#8e8060"/>
<path d="M951 324l2-5 11-11 3 3-11 11z" fill="#f2b82e"/><path d="M962 310l2-2 3 3-2 2z" fill="#e8e8e8"/><path d="M951 324l2-5 3 3z" fill="#f4e0b0"/>
</svg>
<div class="a" style="left:315px;top:330px;width:658px;height:148px;background:#efefef;border:1px solid #5a86b6"></div>
<div class="a" style="left:316px;top:331px;width:656px;height:8px;background:linear-gradient(#ffffff,#f2f2f2);border-bottom:1px solid #d2d2d2"></div>
<div class="a" style="left:315px;top:489px;font-size:12px;line-height:14px;color:#f4f4f4;letter-spacing:3px">记录数:</div>
<div class="a" style="left:837px;top:489px;font-size:12px;line-height:14px;color:#f4f4f4;letter-spacing:1.6px">搜索数据库:</div>
<div class="a" style="left:904px;top:485px;width:66px;height:22px;background:linear-gradient(#707070,#585858);border:1px solid #2e2e2e"></div>
<div class="a" style="left:910px;top:489px;font-size:12px;line-height:14px;color:#f4f4f4">主</div>
<svg style="left:0;top:0" width="1000" height="530"><path d="M956 495h7l-3.5 3.5z" fill="#f0f0f0"/></svg>

<!-- ===== command line ===== -->
<div class="a" style="left:645px;top:977px;width:936px;height:25px;background:linear-gradient(#d0d0d0,#c3c3c3);border-radius:3px 3px 0 0;box-shadow:0 1px 0 #3a3a3a"></div>
<div class="a" style="left:592px;top:976px;width:54px;height:26px;background:linear-gradient(#6a6a6a,#3a3a3a 60%,#333);border-radius:3px 0 0 0;border-left:1px solid #2a2a2a"></div>
<svg style="left:0;top:0" width="1600" height="1010">
<g fill="#a8a8a8"><rect x="596" y="980" width="2" height="2"/><rect x="599" y="980" width="2" height="2"/><rect x="596" y="983" width="2" height="2"/><rect x="599" y="983" width="2" height="2"/><rect x="596" y="986" width="2" height="2"/><rect x="599" y="986" width="2" height="2"/><rect x="596" y="989" width="2" height="2"/><rect x="599" y="989" width="2" height="2"/><rect x="596" y="992" width="2" height="2"/><rect x="599" y="992" width="2" height="2"/><rect x="596" y="995" width="2" height="2"/><rect x="599" y="995" width="2" height="2"/></g>
<path d="M608 985l8 8M616 985l-8 8" stroke="#dcdcdc" stroke-width="2.2"/>
<path d="M634 990l6 6" stroke="#1a1a1a" stroke-width="4"/><path d="M634 990l6 6" stroke="#cfcfcf" stroke-width="2.2"/>
<path d="M632.6 983.4A3.6 3.6 0 1 1 628.9 985.2" fill="none" stroke="#1a1a1a" stroke-width="3.6"/><path d="M632.6 983.4A3.6 3.6 0 1 1 628.9 985.2" fill="none" stroke="#d6d6d6" stroke-width="2"/>
<rect x="651.5" y="982.5" width="14" height="13" rx="1" fill="#a9aeb4" stroke="#8a8f95"/><path d="M654 986l3.5 2.5-3.5 2.5M659 993h4" stroke="#2a2e34" stroke-width="1.1" fill="none"/>
<path d="M669 987h6l-3 3z" fill="#666"/>
<path d="M1569 991h7l-3.5-3.5z" fill="#222"/>
</svg>
<div class="a" style="left:684px;top:982px;font-size:12px;line-height:14px;color:#9a9a9a;transform:skewX(-10deg);letter-spacing:3px">键入命令</div>

<!-- ===== status bar ===== -->
<div class="a" style="left:10px;top:1003px;width:1900px;height:29px;background:#383838"></div>
<div class="a" style="left:1358px;top:1003px;width:552px;height:29px;background:#454545"></div>
<div class="a" style="left:1359px;top:1004px;width:29px;height:27px;background:#4b4b4b;border:1px solid #666666;box-shadow:0 0 0 1px #3e3e3e"></div>
<div class="a" style="left:1389px;top:1004px;width:65px;height:27px;background:#4b4b4b;border:1px solid #666666;box-shadow:0 0 0 1px #3e3e3e"></div>
<div class="a" style="left:1455px;top:1004px;width:103px;height:27px;background:#4b4b4b;border:1px solid #666666;box-shadow:0 0 0 1px #3e3e3e"></div>
<div class="a" style="left:1559px;top:1004px;width:64px;height:27px;background:#4b4b4b;border:1px solid #666666;box-shadow:0 0 0 1px #3e3e3e"></div>
<div class="a" style="left:1624px;top:1004px;width:107px;height:27px;background:#4b4b4b;border:1px solid #666666;box-shadow:0 0 0 1px #3e3e3e"></div>
<div class="a" style="left:1732px;top:1004px;width:40px;height:27px;background:#4b4b4b;border:1px solid #666666;box-shadow:0 0 0 1px #3e3e3e"></div>
<div class="a" style="left:1772px;top:1004px;width:26px;height:27px;background:#4b4b4b;border:1px solid #666666;box-shadow:0 0 0 1px #3e3e3e"></div>
<div class="a" style="left:1799px;top:1004px;width:26px;height:27px;background:#4b4b4b;border:1px solid #666666;box-shadow:0 0 0 1px #3e3e3e"></div>
<div class="a" style="left:1826px;top:1004px;width:32px;height:27px;background:#4b4b4b;border:1px solid #666666;box-shadow:0 0 0 1px #3e3e3e"></div>
<div class="a" style="left:1859px;top:1004px;width:50px;height:27px;background:#4b4b4b;border:1px solid #666666;box-shadow:0 0 0 1px #3e3e3e"></div>
<!-- highlighted -->
<div class="a" style="left:1391px;top:1006px;width:22px;height:22px;background:#5b8fc6"></div>
<div class="a" style="left:1481px;top:1006px;width:22px;height:22px;background:#5b8fc6"></div>
<div class="a" style="left:1560px;top:1006px;width:22px;height:22px;background:#5b8fc6"></div>
<div class="a" style="left:1626px;top:1006px;width:22px;height:22px;background:#5b8fc6"></div>
<div class="a" style="left:1363px;top:1010px;font-size:12px;line-height:14px;color:#f0f0f0;letter-spacing:1px">模型</div>
<div class="a" style="left:1700px;top:1010px;font-size:12px;line-height:14px;color:#f0f0f0;letter-spacing:-0.5px">1:1</div>
<svg style="left:0;top:0" width="1920" height="1048">
<path d="M1397.5 1009v16M1401.5 1009v16M1405.5 1009v16M1394 1012.5h16M1394 1016.5h16M1394 1020.5h16" stroke="#fff" stroke-width="1.2"/>
<g fill="#e8e8e8"><rect x="1420" y="1011" width="2" height="2"/><rect x="1425" y="1011" width="2" height="2"/><rect x="1430" y="1011" width="2" height="2"/><rect x="1420" y="1016" width="2" height="2"/><rect x="1425" y="1016" width="2" height="2"/><rect x="1430" y="1016" width="2" height="2"/><rect x="1420" y="1021" width="2" height="2"/><rect x="1425" y="1021" width="2" height="2"/><rect x="1430" y="1021" width="2" height="2"/></g>
<g fill="#eee">
<path d="M1441 1016h7l-3.5 3.5z"/><path d="M1507 1016h7l-3.5 3.5z"/><path d="M1546 1016h7l-3.5 3.5z"/><path d="M1611 1016h7l-3.5 3.5z"/><path d="M1719 1015h7l-3.5 3.5z"/><path d="M1762 1015h7l-3.5 3.5z"/>
</g>
<path d="M1460.5 1009v16h16M1460.5 1019.5h5v5" stroke="#ddd" fill="none"/>
<circle cx="1490" cy="1019" r="6" fill="none" stroke="#fff" stroke-width="1.3"/><path d="M1490 1019l8-8M1490 1017h9" stroke="#fff" stroke-width="1.3" fill="none"/>
<path d="M1530.5 1009v16" stroke="#3ccc50"/><path d="M1524 1011l12 13" stroke="#e04848"/><circle cx="1530.5" cy="1017.5" r="1.5" fill="#4b4b4b" stroke="#ddd"/>
<path d="M1563 1024h16M1564 1024l12-10" stroke="#fff" stroke-width="1.3"/><circle cx="1570" cy="1019" r="1.6" fill="#fff"/>
<rect x="1588.5" y="1012.5" width="14" height="12" fill="none" stroke="#ddd"/><rect x="1586.5" y="1009.5" width="4" height="4" fill="#4b4b4b" stroke="#f0a868"/>
<path d="M1637 1008l-6 18 6-4 6 4z" fill="#fff"/><circle cx="1643" cy="1012" r="2.5" fill="none" stroke="#fff"/>
<path d="M1660 1010l-6 16 6-4 6 4z" fill="#cfcfcf"/><path d="M1665 1009l-2 4h3l-2 4" stroke="#cfcfcf" fill="none"/>
<path d="M1685 1010l-6 16 6-4 6 4z" fill="#cfcfcf"/>
<circle cx="1744.5" cy="1017" r="5" fill="none" stroke="#d6d6d6" stroke-width="3"/><path d="M1744.5 1009v16M1736.5 1017h16M1739 1011.5l11 11M1750 1011.5l-11 11" stroke="#d6d6d6" stroke-width="2.6" stroke-dasharray="2.5 11"/>
<path d="M1785 1009v16M1777 1017h16" stroke="#f0f0f0" stroke-width="1.6"/>
<rect x="1804.5" y="1009.5" width="6" height="6" fill="none" stroke="#ddd"/><circle cx="1817" cy="1015" r="3" fill="none" stroke="#ddd"/><path d="M1807.5 1019l-3 5h6z" fill="none" stroke="#ddd"/>
<ellipse cx="1840" cy="1012" rx="7" ry="2.5" fill="#d6d6d6"/><path d="M1833 1012v10q7 4 14 0v-10q-7 4-14 0z" fill="#bdbdbd"/><path d="M1842 1022l3 3 5-6" stroke="#2ab84a" stroke-width="2" fill="none"/>
<rect x="1864.5" y="1010.5" width="16" height="13" fill="none" stroke="#ddd"/><path d="M1868 1021l4-4M1868 1021v-3M1868 1021h3M1877 1013l-4 4M1877 1013v3M1877 1013h-3" stroke="#ddd" fill="none"/>
<path d="M1888 1011h16M1888 1017h16M1888 1023h16" stroke="#eee" stroke-width="1.8"/>
</svg>
</body></html>
